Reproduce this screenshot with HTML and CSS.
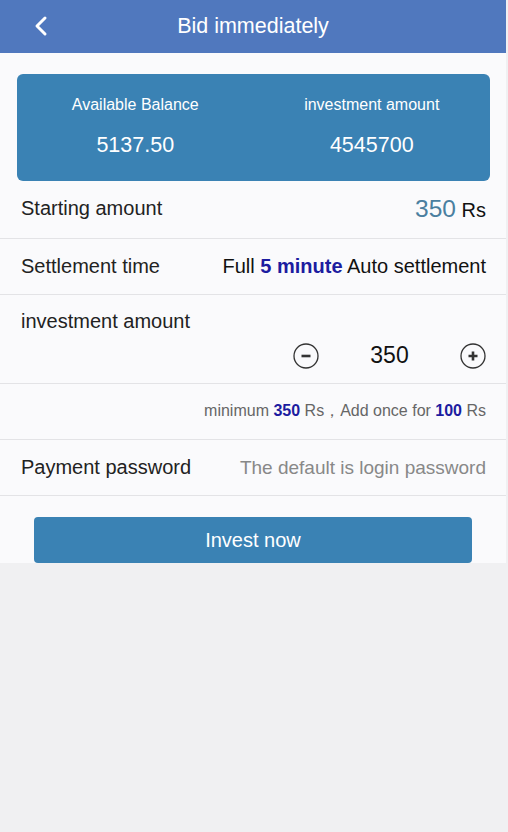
FILE: index.html
```html
<!DOCTYPE html>
<html>
<head>
<meta charset="utf-8">
<link rel="stylesheet" href="styles.css">
</head>
<body>
<div class="page">
  <header class="topbar">
    <span class="back">
      <svg width="16" height="22" viewBox="0 0 16 22"><path d="M12 3 L4 11 L12 19" fill="none" stroke="#fff" stroke-width="3" stroke-linecap="round" stroke-linejoin="round"/></svg>
    </span>
    <h1 class="title">Bid immediately</h1>
  </header>
  <main class="content">
    <section class="card">
      <div class="stat">
        <div class="stat-label">Available Balance</div>
        <div class="stat-value">5137.50</div>
      </div>
      <div class="stat">
        <div class="stat-label">investment amount</div>
        <div class="stat-value">4545700</div>
      </div>
    </section>
    <div class="row row-first">
      <span class="label">Starting amount</span>
      <span class="value"><span class="amt">350</span> Rs</span>
    </div>
    <div class="row">
      <span class="label">Settlement time</span>
      <span class="value">Full <b class="hl">5 minute</b> Auto settlement</span>
    </div>
    <div class="row row-invest">
      <span class="label">investment amount</span>
      <div class="stepper">
        <span class="circ">
          <svg width="26" height="26" viewBox="0 0 26 26"><circle cx="13" cy="13" r="12" fill="none" stroke="#333" stroke-width="1.3"/><path d="M8.5 13 H17.5" stroke="#333" stroke-width="2.6"/></svg>
        </span>
        <span class="num">350</span>
        <span class="circ">
          <svg width="26" height="26" viewBox="0 0 26 26"><circle cx="13" cy="13" r="12" fill="none" stroke="#333" stroke-width="1.3"/><path d="M8.5 13 H17.5 M13 8.5 V17.5" stroke="#333" stroke-width="2.6"/></svg>
        </span>
      </div>
    </div>
    <div class="row row-note">
      <span class="note">minimum <b class="hl">350</b> Rs，Add once for <b class="hl">100</b> Rs</span>
    </div>
    <div class="row">
      <span class="label">Payment password</span>
      <span class="placeholder">The default is login password</span>
    </div>
    <div class="btn-wrap">
      <button class="btn">Invest now</button>
    </div>
  </main>
</div>
</body>
</html>
```
FILE: styles.css
```css
html, body {
  margin: 0;
  padding: 0;
  background: #f0f0f2;
  font-family: "Liberation Sans", Arial, sans-serif;
}
.page {
  width: 506px;
}
.topbar {
  height: 53px;
  background: #5078be;
  display: flex;
  align-items: center;
  justify-content: center;
  position: relative;
}
.back {
  position: absolute;
  left: 33px;
  top: 15px;
  display: flex;
}
.title {
  margin: 0;
  color: #fff;
  font-size: 21.5px;
  font-weight: normal;
}
.content {
  background: #fafafc;
  padding-top: 21px;
}
.card {
  margin: 0 16px 0 17px;
  height: 107px;
  background: #3a82b4;
  border-radius: 6px;
  display: flex;
  color: #fff;
}
.stat {
  flex: 1;
  display: flex;
  flex-direction: column;
  align-items: center;
  padding-top: 22px;
}
.stat-label {
  font-size: 16px;
  line-height: 18px;
}
.stat-value {
  font-size: 21.5px;
  line-height: 24px;
  margin-top: 19px;
}
.row {
  display: flex;
  justify-content: space-between;
  align-items: center;
  height: 55px;
  padding: 0 20px 0 21px;
  border-bottom: 1px solid #e3e3e6;
  font-size: 20px;
  color: #222;
}
.row-first {
  box-sizing: border-box;
  height: 58px;
  padding-bottom: 2px;
}
.value { color: #111; }
.amt {
  color: #4a7fa0;
  font-size: 24.5px;
}
.hl {
  color: #1c1ca0;
}
.row-invest {
  height: 89px;
  flex-direction: column;
  align-items: stretch;
  justify-content: flex-start;
  box-sizing: border-box;
  padding-top: 15px;
}
.row-invest .label {
  line-height: 22px;
}
.stepper {
  display: flex;
  justify-content: flex-end;
  align-items: center;
  margin-top: 10px;
}
.circ {
  display: flex;
}
.num {
  font-size: 23px;
  width: 141px;
  text-align: center;
  color: #111;
  padding: 0 29px;
  box-sizing: border-box;
}
.row-note {
  justify-content: flex-end;
}
.note {
  font-size: 16px;
  color: #666;
}
.placeholder {
  color: #888;
  font-size: 19px;
}
.btn-wrap {
  padding: 21px 34px 0 34px;
}
.btn {
  width: 100%;
  height: 46px;
  border: none;
  border-radius: 4px;
  background: #3a82b4;
  color: #fff;
  font-family: "Liberation Sans", Arial, sans-serif;
  font-size: 20px;
  display: block;
}
```
